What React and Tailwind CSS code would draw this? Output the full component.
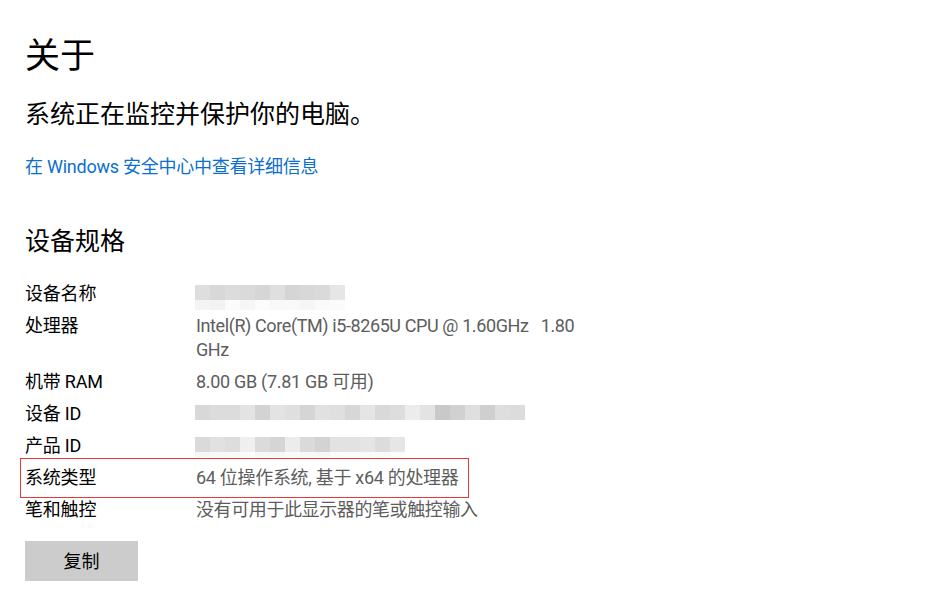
import React from "react";

const nameBlocks = ["#dedede", "#d8d8d8", "#dcdcdc", "#dadada", "#d6d6d6", "#dfdfdf", "#d5d5d5", "#d8d8d8", "#dadada", "#e6e6e6"];
const nameFaint = ["#f4f4f4", "#f2f2f2", "#fbfbfb", "#f6f6f6", "#fcfcfc", "#f8f8f8", "#f9f9f9", "#f6f6f6", "#fafafa", "#fbfbfb"];
const deviceIdBlocks = ["#d8d8d8", "#dcdcdc", "#dcdcdc", "#e3e3e3", "#d3d3d3", "#e3e3e3", "#dfdfdf", "#d5d5d5", "#e1e1e1", "#dfdfdf", "#d7d7d7", "#e5e5e5", "#d9d9d9", "#dddddd", "#ececec", "#e3e3e3", "#c9c9c9", "#d1d1d1", "#dfdfdf", "#cfcfcf", "#dedede", "#dcdcdc"];
const productIdBlocks = ["#dadada", "#e1e1e1", "#dddddd", "#efefef", "#dbdbdb", "#d5d5d5", "#ececec", "#dadada", "#d3d3d3", "#e2e2e2", "#e2e2e2", "#e5e5e5", "#dcdcdc", "#e6e6e6"];
const productFaint = ["#f6f6f6", "#f8f8f8", "#f9f9f9", "#fbfbfb", "#f7f7f7", "#f6f6f6", "#fafafa", "#f8f8f8", "#f7f7f7", "#fbfbfb", "#fcfcfc", "#fafafa", "#f9f9f9", "#fbfbfb"];

// pixelated placeholder for the blurred-out values
const Mosaic = ({ blocks, faint, faintHeight = "h-[10px]" }) => (
  <div className="pt-[3px] -ml-px">
    <div className="flex">
      {blocks.map((c, i) => (
        <div key={i} className="w-[15px] h-[15px]" style={{ backgroundColor: c }} />
      ))}
    </div>
    {faint && (
      <div className="flex">
        {faint.map((c, i) => (
          <div key={i} className={`w-[15px] ${faintHeight}`} style={{ backgroundColor: c }} />
        ))}
      </div>
    )}
  </div>
);

const Row = ({ label, children, highlight, valueClass = "" }) => (
  <div className="relative flex text-[18px] leading-[24px]">
    {highlight && (
      <div className="absolute -left-[5px] -top-[8px] w-[449px] h-[40px] border border-[#e8393a] pointer-events-none" />
    )}
    <div className="w-[171px] shrink-0 text-black tracking-[-0.2px]">{label}</div>
    <div className={`w-[390px] text-[#5d5d5d] whitespace-pre-wrap ${valueClass}`}>{children}</div>
  </div>
);

const App = () => {
  return (
    <div className="w-[927px] h-[589px] bg-white overflow-hidden pl-[25px] font-['Roboto','Noto_Sans_CJK_SC',sans-serif]">
      <h1 className="mt-[33px] text-[35px] leading-[48px] text-black font-normal">关于</h1>
      <p className="mt-[18px] text-[25px] leading-[32px] text-black">系统正在监控并保护你的电脑。</p>
      <a className="block mt-[24px] text-[18px] leading-[24px] text-[#0b6fcf] tracking-[-0.25px]">
        在 Windows 安全中心中查看详细信息
      </a>

      <h2 className="mt-[47px] text-[25px] leading-[32px] text-black font-normal">设备规格</h2>

      <div className="mt-[24px] flex flex-col gap-[8px]">
        <Row label="设备名称">
          <div className="h-[24px]">
            <Mosaic blocks={nameBlocks} faint={nameFaint} />
          </div>
        </Row>
        <Row label="处理器" valueClass="tracking-[-0.4px]">
          {"Intel(R) Core(TM) i5-8265U CPU @ 1.60GHz   1.80 GHz"}
        </Row>
        <Row label="机带 RAM" valueClass="tracking-[-0.3px]">8.00 GB (7.81 GB 可用)</Row>
        <Row label="设备 ID">
          <div className="h-[24px]">
            <Mosaic blocks={deviceIdBlocks} />
          </div>
        </Row>
        <Row label="产品 ID">
          <div className="h-[24px]">
            <Mosaic blocks={productIdBlocks} faint={productFaint} faintHeight="h-[5px]" />
          </div>
        </Row>
        <Row label="系统类型" highlight valueClass="tracking-[-0.3px]">
          64 位操作系统, 基于 x64 的处理器
        </Row>
        <Row label="笔和触控" valueClass="tracking-[-0.4px]">没有可用于此显示器的笔或触控输入</Row>
      </div>

      <button className="mt-[19px] w-[113px] h-[40px] bg-[#cccccc] text-[18px] text-black flex items-center justify-center">
        复制
      </button>
    </div>
  );
};

export default App;
